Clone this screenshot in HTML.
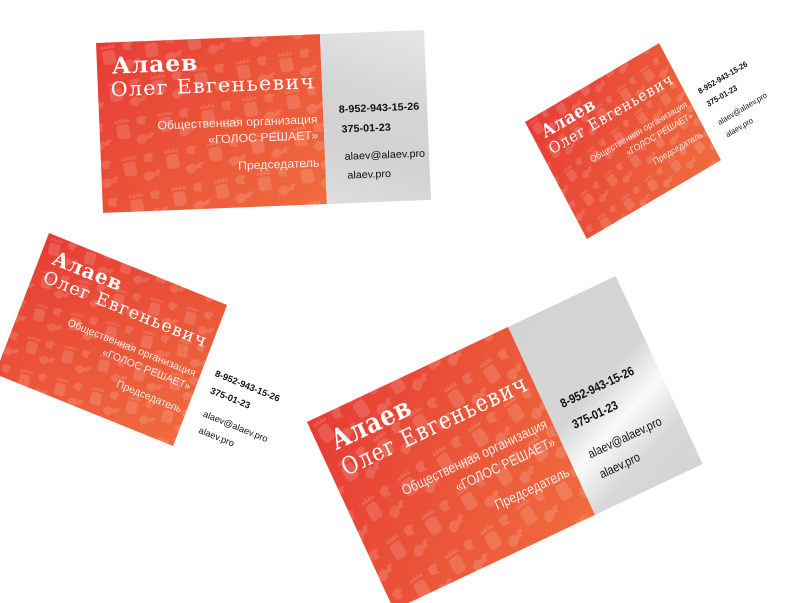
<!DOCTYPE html>
<html><head><meta charset="utf-8">
<style>
html,body{margin:0;padding:0;background:#fff;width:801px;height:603px;overflow:hidden;position:relative}
.card{position:absolute;left:0;top:0;width:340px;height:180px;transform-origin:0 0;font-family:"Liberation Sans","DejaVu Sans",sans-serif}
.red{position:absolute;left:0;top:0;width:228px;height:180px;overflow:hidden;background:linear-gradient(135deg,#e63c36 0%,#ea5238 45%,#f06c3e 100%)}
.red svg{position:absolute;left:0;top:0}
.grey{position:absolute;left:228px;top:0;width:112px;height:180px}
.g1{background:linear-gradient(200deg,#e6e6e6 0%,#d5d5d5 40%,#d2d2d2 70%,#dedede 100%);width:106px}
.g4{background:linear-gradient(160deg,#d3d3d3 0%,#d5d5d5 45%,#fafafa 62%,#d8d8d8 80%,#d4d4d4 100%);width:122px}
.t{position:absolute;white-space:nowrap;line-height:1}
.n1{left:15px;top:10px;font:bold 24px "DejaVu Serif",serif;color:#fff;letter-spacing:0.8px}
.n2{left:13px;top:38px;font:21px "DejaVu Serif",serif;color:#fff;letter-spacing:1.3px}
.o{right:6px;font-size:12.5px;color:rgba(255,255,255,0.88)}
.c{font-size:11px;color:#111}
.b{font-weight:bold}
</style></head><body>

<svg width="0" height="0" style="position:absolute">
<defs>
<pattern id="pt" width="44" height="40" patternUnits="userSpaceOnUse" patternTransform="rotate(-8)">
<g fill="#fff" fill-opacity="0.14">
<rect x="4" y="10" width="13" height="15" rx="3"/>
<path d="M3 8 l2 -4 2 3 2 -4 2 4 2 -4 2 4 2 -3 2 4z"/>
<path d="M22 28 c3 -6 9 -6 12 -2 c2 -4 6 -4 8 -1 c-3 0 -4 2 -3 5 c-3 -2 -6 -1 -8 2 c-3 2 -7 2 -9 -4z"/>
<path d="M26 6 c4 -3 9 -2 11 1 c-3 1 -4 4 -2 7 c-4 -1 -7 0 -9 -3z"/>
</g>
</pattern>
</defs>
</svg>

<!-- Card 1 -->
<div class="card" style="transform:matrix(0.982,-0.039,0.039,0.944,96,43)">
 <div class="red"><svg width="228" height="180"><rect width="228" height="180" fill="url(#pt)"/></svg>
  <div class="t n1">Алаев</div>
  <div class="t n2">Олег Евгеньевич</div>
  <div class="t o" style="top:84px">Общественная организация</div>
  <div class="t o" style="top:101px">«ГОЛОС РЕШАЕТ»</div>
  <div class="t o" style="top:130px">Председатель</div>
 </div>
 <div class="grey g1">
  <div class="t c b" style="left:16px;top:76px">8-952-943-15-26</div>
  <div class="t c b" style="left:18px;top:97px">375-01-23</div>
  <div class="t c" style="left:20px;top:126px">alaev@alaev.pro</div>
  <div class="t c" style="left:22px;top:146px">alaev.pro</div>
 </div>
</div>

<!-- Card 2 -->
<div class="card" style="transform:matrix(0.588,-0.346,0.344,0.650,525,122)">
 <div class="red"><svg width="228" height="180"><rect width="228" height="180" fill="url(#pt)"/></svg>
  <div class="t n1">Алаев</div>
  <div class="t n2">Олег Евгеньевич</div>
  <div class="t o" style="top:84px">Общественная организация</div>
  <div class="t o" style="top:101px">«ГОЛОС РЕШАЕТ»</div>
  <div class="t o" style="top:130px">Председатель</div>
 </div>
 <div class="grey">
  <div class="t c b" style="left:18px;top:80px">8-952-943-15-26</div>
  <div class="t c b" style="left:20px;top:101px">375-01-23</div>
  <div class="t c" style="left:22px;top:130px">alaev@alaev.pro</div>
  <div class="t c" style="left:24px;top:150px">alaev.pro</div>
 </div>
</div>

<!-- Card 3 -->
<div class="card" style="transform:matrix(0.781,0.316,-0.300,0.783,49,233)">
 <div class="red"><svg width="228" height="180"><rect width="228" height="180" fill="url(#pt)"/></svg>
  <div class="t n1">Алаев</div>
  <div class="t n2">Олег Евгеньевич</div>
  <div class="t o" style="top:84px">Общественная организация</div>
  <div class="t o" style="top:101px">«ГОЛОС РЕШАЕТ»</div>
  <div class="t o" style="top:130px">Председатель</div>
 </div>
 <div class="grey">
  <div class="t c b" style="left:16px;top:76px">8-952-943-15-26</div>
  <div class="t c b" style="left:18px;top:97px">375-01-23</div>
  <div class="t c" style="left:20px;top:126px">alaev@alaev.pro</div>
  <div class="t c" style="left:22px;top:146px">alaev.pro</div>
 </div>
</div>

<!-- Card 4 -->
<div class="card" style="transform:matrix(0.882,-0.417,0.483,1.044,307,422)">
 <div class="red"><svg width="228" height="180"><rect width="228" height="180" fill="url(#pt)"/></svg>
  <div class="t n1">Алаев</div>
  <div class="t n2">Олег Евгеньевич</div>
  <div class="t o" style="top:84px">Общественная организация</div>
  <div class="t o" style="top:101px">«ГОЛОС РЕШАЕТ»</div>
  <div class="t o" style="top:130px">Председатель</div>
 </div>
 <div class="grey g4">
  <div class="t c b" style="left:16px;top:76px">8-952-943-15-26</div>
  <div class="t c b" style="left:18px;top:97px">375-01-23</div>
  <div class="t c" style="left:20px;top:126px">alaev@alaev.pro</div>
  <div class="t c" style="left:22px;top:146px">alaev.pro</div>
 </div>
</div>

</body></html>
